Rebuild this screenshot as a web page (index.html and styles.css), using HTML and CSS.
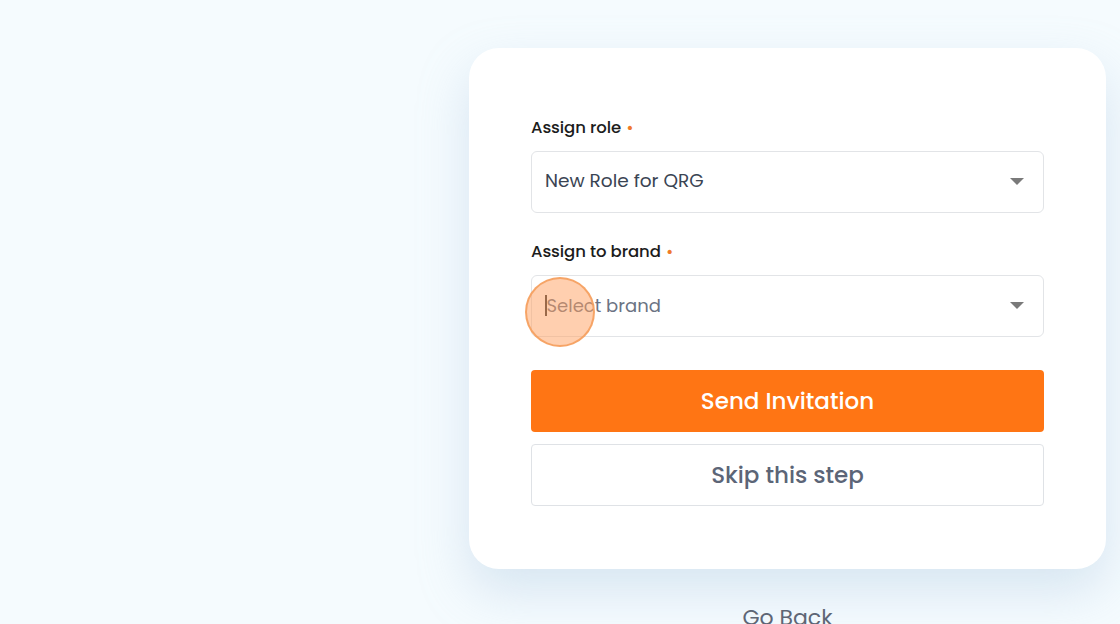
FILE: index.html
```html
<!DOCTYPE html>
<html>
<head>
<meta charset="utf-8">
<link rel="stylesheet" href="styles.css">
</head>
<body>
<div class="page">
  <div class="column">
    <div class="card">
      <div class="field">
        <div class="label">Assign role <span class="req">•</span></div>
        <div class="select">
          <span class="value">New Role for QRG</span>
          <svg class="caret" width="14" height="8" viewBox="0 0 14 8"><path d="M0 0 L14 0 L7 7 Z" fill="#7a7a7a"/></svg>
        </div>
      </div>
      <div class="field">
        <div class="label">Assign to brand <span class="req">•</span></div>
        <div class="select">
          <span class="placeholder"><span class="cursor"></span>Select brand</span>
          <svg class="caret" width="14" height="8" viewBox="0 0 14 8"><path d="M0 0 L14 0 L7 7 Z" fill="#7a7a7a"/></svg>
          <span class="click"></span>
        </div>
      </div>
      <button class="btn primary">Send Invitation</button>
      <button class="btn secondary">Skip this step</button>
    </div>
    <div class="goback">Go Back</div>
  </div>
</div>
</body>
</html>
```
FILE: styles.css
```css
html, body {
  margin: 0;
  padding: 0;
  height: 100%;
  overflow: hidden;
}
body {
  background: #f5fbfe;
  font-family: "Poppins", "Inter", "Liberation Sans", sans-serif;
}
.page {
  display: flex;
  justify-content: flex-end;
  padding: 48px 14px 0 0;
}
.column {
  width: 637px;
  display: flex;
  flex-direction: column;
  align-items: center;
}
.card {
  box-sizing: border-box;
  width: 637px;
  height: 521px;
  background: #ffffff;
  border-radius: 30px;
  box-shadow: 0 22px 50px rgba(165, 195, 222, 0.38);
  padding: 69px 62px 0 62px;
  display: flex;
  flex-direction: column;
}
.field {
  display: flex;
  flex-direction: column;
  margin-bottom: 28px;
}
.field + .field {
  margin-bottom: 33px;
}
.label {
  font-size: 16.5px;
  font-weight: 500;
  color: #1c1c1c;
  height: 22px;
  line-height: 22px;
  margin-bottom: 12px;
  letter-spacing: -0.1px;
}
.req {
  color: #f07a2a;
  font-size: 16px;
  margin-left: 1px;
}
.select {
  position: relative;
  box-sizing: border-box;
  height: 62px;
  border: 1px solid #e2e4e7;
  border-radius: 6px;
  display: flex;
  align-items: center;
  padding: 0 19px 0 13px;
}
.value {
  flex: 1;
  font-size: 18.5px;
  color: #3a4453;
  line-height: 24px;
  margin-top: -2px;
}
.placeholder {
  flex: 1;
  font-size: 18px;
  color: #6b7383;
  display: flex;
  align-items: center;
  margin-top: -1px;
}
.cursor {
  display: inline-block;
  width: 1.5px;
  height: 21px;
  background: #333;
}
.caret {
  display: block;
}
.click {
  position: absolute;
  left: -7px;
  top: 1px;
  width: 70px;
  height: 70px;
  border-radius: 50%;
  background: rgba(255, 160, 95, 0.5);
  border: 2px solid rgba(245, 160, 95, 0.9);
  box-sizing: border-box;
}
.btn {
  box-sizing: border-box;
  width: 513px;
  height: 62px;
  border-radius: 4px;
  font-family: inherit;
  font-size: 23px;
  font-weight: 500;
  cursor: pointer;
}
.primary {
  background: #ff7514;
  color: #ffffff;
  border: none;
}
.secondary {
  margin-top: 12px;
  background: #ffffff;
  border: 1px solid #dfe2e6;
  color: #5c6577;
}
.goback {
  margin-top: 32px;
  font-size: 22px;
  color: #5e6675;
}
```
